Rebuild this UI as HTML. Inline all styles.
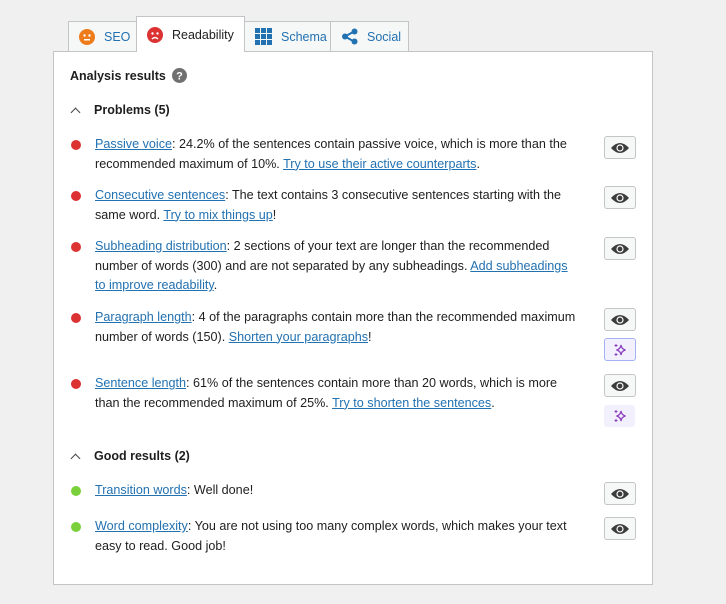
<!DOCTYPE html>
<html><head><style>
body{margin:0;width:726px;height:604px;background:#f0f0f1;font-family:"Liberation Sans",sans-serif;font-size:12.6px;color:#1e1e1e;position:relative;overflow:hidden}
.tab{position:absolute;top:21px;height:30px;border:1px solid #c3c4c7;border-bottom:none;background:#f6f7f7;color:#2271b1;font-size:12.5px;box-sizing:border-box;display:flex;align-items:center;gap:9px;padding-left:10px}
.tab.act{top:16px;height:36px;background:#fff;color:#1e1e1e;z-index:2}
.panel{position:absolute;left:53px;top:51px;width:600px;height:534px;background:#fff;border:1px solid #c3c4c7;box-sizing:border-box}
.abs{position:absolute}
.h{font-weight:bold;font-size:12.5px}
.item{position:absolute;left:95px;width:488px;line-height:19.5px}
.dot{position:absolute;left:71px;width:10px;height:10px;border-radius:50%}
.red{background:#dc3232}.grn{background:#7ad03a}
a{color:#2271b1;text-decoration:underline}
.btn{position:absolute;left:604px;width:30px;height:21px;border:1px solid #c3c4c7;border-radius:3px;background:#f6f7f7;display:flex;align-items:center;justify-content:center}
.ai{position:absolute;left:604px;width:31px;height:22px;border-radius:3px;background:#f3f0fd;display:flex;align-items:center;justify-content:center}
.chev{position:absolute;left:72px;width:6px;height:6px;border-left:1.3px solid #444;border-top:1.3px solid #444;transform:rotate(45deg)}
</style></head><body>
<div class="tab" style="left:68px;width:69px"><svg width="16" height="16"><circle cx="8" cy="8" r="8" fill="#ee7c1b"/><circle cx="5.5" cy="6.5" r="1.2" fill="#fff"/><circle cx="10.5" cy="6.5" r="1.2" fill="#fff"/><rect x="5" y="10" width="6" height="1.5" fill="#fff"/></svg>SEO</div>
<div class="tab act" style="left:136px;width:109px"><svg width="16" height="16"><circle cx="8" cy="8" r="8" fill="#dc3232"/><circle cx="5.5" cy="6.5" r="1.2" fill="#fff"/><circle cx="10.5" cy="6.5" r="1.2" fill="#fff"/><path d="M5 12 Q8 9 11 12" stroke="#fff" stroke-width="1.5" fill="none"/></svg>Readability</div>
<div class="tab" style="left:244px;width:87px"><svg width="17" height="17" fill="#2271b1"><rect x="0" y="0" width="5" height="5"/><rect x="6" y="0" width="5" height="5"/><rect x="12" y="0" width="5" height="5"/><rect x="0" y="6" width="5" height="5"/><rect x="6" y="6" width="5" height="5"/><rect x="12" y="6" width="5" height="5"/><rect x="0" y="12" width="5" height="5"/><rect x="6" y="12" width="5" height="5"/><rect x="12" y="12" width="5" height="5"/></svg>Schema</div>
<div class="tab" style="left:330px;width:79px"><svg width="17" height="17"><path d="M4 8.5L13 3.5M4 8.5L13 13.5" stroke="#2271b1" stroke-width="2"/><circle cx="4" cy="8.5" r="3" fill="#2271b1"/><circle cx="13.5" cy="3.5" r="3" fill="#2271b1"/><circle cx="13.5" cy="13.5" r="3" fill="#2271b1"/></svg>Social</div>
<div class="panel"></div>
<div class="abs h" style="left:70px;top:69px">Analysis results</div>
<svg class="abs" style="left:172px;top:68px" width="15" height="15"><circle cx="7.5" cy="7.5" r="7.5" fill="#707070"/><text x="7.5" y="11.5" font-size="11" font-weight="bold" fill="#fff" text-anchor="middle" font-family="Liberation Sans">?</text></svg>
<div class="chev" style="top:109px"></div><div class="abs h" style="left:94px;top:103px">Problems (5)</div>

<div class="dot red" style="top:140px"></div>
<div class="item" style="top:135px"><a>Passive voice</a>: 24.2% of the sentences contain passive voice, which is more than the recommended maximum of 10%. <a>Try to use their active counterparts</a>.</div>
<div class="dot red" style="top:191px"></div>
<div class="item" style="top:186px"><a>Consecutive sentences</a>: The text contains 3 consecutive sentences starting with the same word. <a>Try to mix things up</a>!</div>
<div class="dot red" style="top:242px"></div>
<div class="item" style="top:237px"><a>Subheading distribution</a>: 2 sections of your text are longer than the recommended number of words (300) and are not separated by any subheadings. <a>Add subheadings</a><br><a>to improve readability</a>.</div>
<div class="dot red" style="top:313px"></div>
<div class="item" style="top:308px;width:500px"><a>Paragraph length</a>: 4 of the paragraphs contain more than the recommended maximum number of words (150). <a>Shorten your paragraphs</a>!</div>
<div class="dot red" style="top:379px"></div>
<div class="item" style="top:374px"><a>Sentence length</a>: 61% of the sentences contain more than 20 words, which is more<br>than the recommended maximum of 25%. <a>Try to shorten the sentences</a>.</div>

<div class="chev" style="top:455px"></div><div class="abs h" style="left:94px;top:449px">Good results (2)</div>
<div class="dot grn" style="top:486px"></div>
<div class="item" style="top:481px"><a>Transition words</a>: Well done!</div>
<div class="dot grn" style="top:522px"></div>
<div class="item" style="top:517px"><a>Word complexity</a>: You are not using too many complex words, which makes your text easy to read. Good job!</div>

<div class="btn" style="top:136px"><svg width="20" height="14"><path d="M1 7Q10-3 19 7Q10 17 1 7Z" fill="#3c3c3c"/><circle cx="10" cy="7" r="3.6" fill="#fff"/><circle cx="10" cy="7" r="2.4" fill="#3c3c3c"/></svg></div>
<div class="btn" style="top:186px"><svg width="20" height="14"><path d="M1 7Q10-3 19 7Q10 17 1 7Z" fill="#3c3c3c"/><circle cx="10" cy="7" r="3.6" fill="#fff"/><circle cx="10" cy="7" r="2.4" fill="#3c3c3c"/></svg></div>
<div class="btn" style="top:237px"><svg width="20" height="14"><path d="M1 7Q10-3 19 7Q10 17 1 7Z" fill="#3c3c3c"/><circle cx="10" cy="7" r="3.6" fill="#fff"/><circle cx="10" cy="7" r="2.4" fill="#3c3c3c"/></svg></div>
<div class="btn" style="top:308px"><svg width="20" height="14"><path d="M1 7Q10-3 19 7Q10 17 1 7Z" fill="#3c3c3c"/><circle cx="10" cy="7" r="3.6" fill="#fff"/><circle cx="10" cy="7" r="2.4" fill="#3c3c3c"/></svg></div>
<div class="ai" style="top:338px;border:1px solid #a4b2f5;width:30px;height:21px"><svg width="14" height="14"><path d="M8 2Q8.5 6 12.5 7Q8.5 8 8 12Q7.5 8 3.5 7Q7.5 6 8 2Z" fill="none" stroke="#8a3fc0" stroke-width="1.3"/><path d="M3 1v3M1.5 2.5h3M3 10v3M1.5 11.5h3" stroke="#8a3fc0" stroke-width="1"/></svg></div>
<div class="btn" style="top:374px"><svg width="20" height="14"><path d="M1 7Q10-3 19 7Q10 17 1 7Z" fill="#3c3c3c"/><circle cx="10" cy="7" r="3.6" fill="#fff"/><circle cx="10" cy="7" r="2.4" fill="#3c3c3c"/></svg></div>
<div class="ai" style="top:405px"><svg width="14" height="14"><path d="M8 2Q8.5 6 12.5 7Q8.5 8 8 12Q7.5 8 3.5 7Q7.5 6 8 2Z" fill="none" stroke="#8a3fc0" stroke-width="1.3"/><path d="M3 1v3M1.5 2.5h3M3 10v3M1.5 11.5h3" stroke="#8a3fc0" stroke-width="1"/></svg></div>
<div class="btn" style="top:482px"><svg width="20" height="14"><path d="M1 7Q10-3 19 7Q10 17 1 7Z" fill="#3c3c3c"/><circle cx="10" cy="7" r="3.6" fill="#fff"/><circle cx="10" cy="7" r="2.4" fill="#3c3c3c"/></svg></div>
<div class="btn" style="top:517px"><svg width="20" height="14"><path d="M1 7Q10-3 19 7Q10 17 1 7Z" fill="#3c3c3c"/><circle cx="10" cy="7" r="3.6" fill="#fff"/><circle cx="10" cy="7" r="2.4" fill="#3c3c3c"/></svg></div>
</body></html>
